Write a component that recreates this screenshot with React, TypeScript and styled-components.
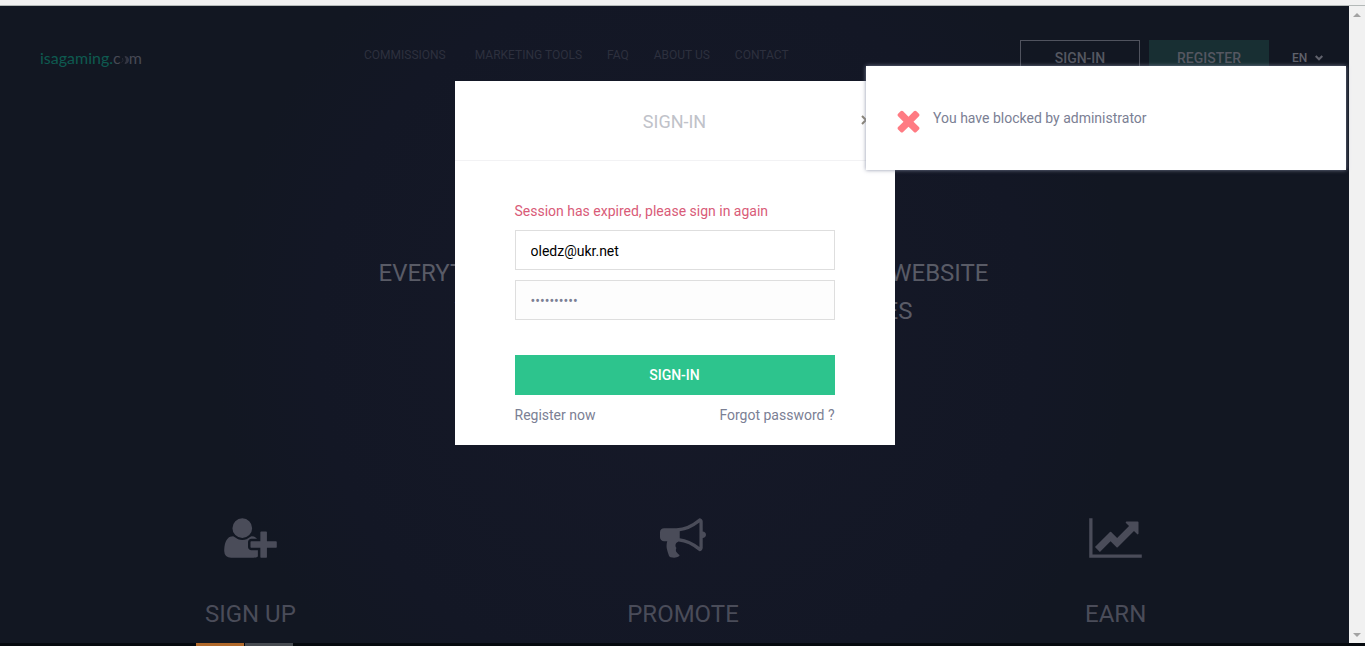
import React from 'react';
import styled, { createGlobalStyle } from 'styled-components';

const GlobalStyle = createGlobalStyle`
  *, *::before, *::after { box-sizing: border-box; }
  html, body { margin: 0; height: 100%; }
  body { background: #131622; font-family: Roboto, "Liberation Sans", sans-serif; font-size: 14px; color: #7b8094; overflow: hidden; }
  #root { height: 100%; }
  h1, h2, p, ul { margin: 0; padding: 0; font-weight: 400; }
  button, input, select { font-family: inherit; }
  a { color: inherit; text-decoration: none; }
`;

const Screen = styled.div`
  display: flex;
  flex-direction: column;
  min-height: 100vh;
`;

const BrowserEdge = styled.div`
  height: 6px;
  background: #f1f1f1;
  border-bottom: 1px solid #b4b9b8;
`;

const Viewport = styled.div`
  position: relative;
  display: flex;
  flex: 1;
`;

const Page = styled.div`
  flex: 1;
  display: flex;
  flex-direction: column;
  background: radial-gradient(circle at 50% 52%, #161928 0, #131725 360px, #121722 460px);
`;

const ScrollTrack = styled.div`
  width: 16px;
  background: #f1f1f1;
  display: flex;
  flex-direction: column;
  justify-content: space-between;
  align-items: center;
  padding: 7px 0 6px;
`;

const Arrow = styled.span<{ $down?: boolean }>`
  border: 4px solid transparent;
  border-top: ${p => (p.$down ? '4px solid #a3a3a3' : '0')};
  border-bottom: ${p => (p.$down ? '0' : '4px solid #a3a3a3')};
`;

const Header = styled.header`
  display: flex;
  align-items: flex-start;
  padding: 34px 26px 0 40px;
  height: 80px;
`;

const Logo = styled.a`
  width: 324px;
  padding-top: 8px;
`;

const Nav = styled.nav`
  display: flex;
  gap: 25px;
  flex: 1;
  padding-top: 6px;
  font-size: 12px;
  line-height: 18px;
  color: #2d303e;
  white-space: nowrap;

  a:first-child { margin-right: 4px; }
`;

const HeaderButton = styled.button<{ $filled?: boolean }>`
  width: 120px;
  height: 36px;
  padding: 0;
  margin-right: 9px;
  border: 1px solid ${p => (p.$filled ? '#182f33' : '#50535e')};
  background: ${p => (p.$filled ? '#182f33' : 'transparent')};
  color: #555761;
  font-size: 14px;
  font-weight: 500;
`;

const Language = styled.label`
  display: flex;
  align-items: center;
  gap: 6px;
  margin-left: 14px;
  height: 36px;
`;

const LanguageSelect = styled.select`
  appearance: none;
  width: 17px;
  padding: 0;
  border: 0;
  background: transparent;
  color: #60626c;
  font-size: 12px;
  font-weight: 500;
`;

const Hero = styled.h1`
  align-self: center;
  display: flex;
  flex-direction: column;
  align-items: center;
  margin: 168px 0 0 18px;
  font-size: 24px;
  line-height: 38px;
  color: #595b66;
  white-space: nowrap;
`;

const HeroLine = styled.span<{ $width: number }>`
  display: flex;
  justify-content: space-between;
  width: ${p => p.$width}px;
`;

const Steps = styled.section`
  display: flex;
  margin-top: 185px;
  padding: 0 17px 0 34px;
`;

const Step = styled.div`
  flex: 1;
  display: flex;
  flex-direction: column;
  align-items: center;
  gap: 37px;
  color: #4a4c59;

  h2 { font-size: 24px; line-height: 32px; }
`;

const Modal = styled.div`
  position: absolute;
  top: 75px;
  left: calc(50% - 228px);
  width: 440px;
  background: #fff;
  padding-bottom: 20px;
`;

const ModalHeader = styled.div`
  position: relative;
  display: flex;
  align-items: center;
  justify-content: center;
  height: 80px;
  padding-top: 2px;
  border-bottom: 1px solid #f2f2f4;
  color: #c0c2c9;

  h2 { font-size: 18px; }
`;

const Close = styled.button`
  position: absolute;
  top: 34px;
  right: 24px;
  padding: 0;
  border: 0;
  background: transparent;
  color: #8a8578;
  display: flex;
`;

const Form = styled.form`
  display: flex;
  flex-direction: column;
  padding: 40px 60px 0;
`;

const ErrorText = styled.p`
  color: #d95b78;
  line-height: 20px;
  margin-bottom: 9px;
`;

const Field = styled.input`
  height: 40px;
  margin-bottom: 10px;
  padding: 2px 15px 0;
  border: 1px solid #dedede;
  background: #fff;
  color: #000;
  font-size: 14px;

  &[type='password'] { background: #fdfdfd; color: #7b8094; }
`;

const Submit = styled.button`
  height: 40px;
  margin-top: 25px;
  border: 0;
  background: #2dc48d;
  color: #fff;
  font-size: 14px;
  font-weight: 500;
`;

const Links = styled.div`
  display: flex;
  justify-content: space-between;
  margin-top: 10px;
  line-height: 20px;
`;

const Toast = styled.div`
  position: absolute;
  top: 60px;
  right: 19px;
  display: flex;
  align-items: center;
  gap: 8px;
  width: 480px;
  height: 104px;
  padding: 4px 0 0 26px;
  background: #fff;
  box-shadow: 0 0 4px rgba(130, 135, 160, 0.9);

  p { margin-bottom: 4px; }
`;

const Taskbar = styled.div`
  display: flex;
  gap: 1px;
  height: 3px;
  padding-left: 196px;
  background: #05090e;
`;

const TaskItem = styled.span<{ $color: string }>`
  width: 48px;
  background: ${p => p.$color};
`;

const UserPlusIcon = () => (
  <svg width="53" height="46" viewBox="0 0 2048 1792" fill="currentColor" aria-hidden="true">
    <path d="M704 896q-159 0-271.500-112.500t-112.500-271.500 112.500-271.500 271.500-112.500 271.500 112.500 112.500 271.500-112.500 271.500-271.500 112.500zm960 128h352q13 0 22.500 9.500t9.500 22.500v192q0 13-9.500 22.500t-22.500 9.500h-352v352q0 13-9.500 22.500t-22.500 9.500h-192q-13 0-22.500-9.500t-9.500-22.500v-352h-352q-13 0-22.500-9.500t-9.500-22.500v-192q0-13 9.500-22.500t22.500-9.500h352v-352q0-13 9.500-22.500t22.500-9.500h192q13 0 22.500 9.500t9.500 22.500v352zm-736 224q0 52 38 90t90 38h256v238q-68 50-171 50h-874q-121 0-194-69t-73-190q0-53 3.500-103.500t14-109 26.500-108.500 43-97.500 62-81 85.500-53.500 111.500-20q19 0 39 17 79 61 154.500 91.500t164.500 30.500 164.500-30.500 154.500-91.500q20-17 39-17 132 0 217 96h-223q-52 0-90 38t-38 90v192z" />
  </svg>
);

const BullhornIcon = () => (
  <svg width="46" height="46" viewBox="0 0 1792 1792" fill="currentColor" aria-hidden="true">
    <path d="M1664 640q53 0 90.500 37.500t37.500 90.500-37.500 90.500-90.500 37.500v384q0 52-38 90t-90 38q-417-347-812-380-58 19-91 66t-31 100.500 40 92.500q-20 33-23 65.500t6 58 33.500 55 48 50 61.500 50.500q-29 58-111.500 83t-168.500 11.500-132-55.500q-7-23-29.500-87.500t-32-94.500-23-89-15-101 3.500-98.500 22-110.500h-122q-66 0-113-47t-47-113v-192q0-66 47-113t113-47h480q435 0 896-384 52 0 90 38t38 90v384zm-128 604v-954q-394 302-768 343v270q377 42 768 341z" />
  </svg>
);

const ChartIcon = () => (
  <svg width="53" height="46" viewBox="0 0 2048 1792" fill="currentColor" aria-hidden="true">
    <path d="M2048 1536v128h-2048v-1536h128v1408h1920zm-128-1248v435q0 21-19.500 29.500t-35.500-7.500l-121-121-633 633q-10 10-23 10t-23-10l-233-233-416 416-192-192 585-585q10-10 23-10t23 10l233 233 464-464-121-121q-16-16-7.500-35.500t29.500-19.500h435q14 0 23 9t9 23z" />
  </svg>
);

const TimesIcon = () => (
  <svg width="33" height="33" viewBox="0 0 1792 1792" fill="#ff7b83" aria-hidden="true">
    <path d="M1490 1322q0 40-28 68l-136 136q-28 28-68 28t-68-28l-294-294-294 294q-28 28-68 28t-68-28l-136-136q-28-28-28-68t28-68l294-294-294-294q-28-28-28-68t28-68l136-136q28-28 68-28t68 28l294 294 294-294q28-28 68-28t68 28l136 136q28 28 28 68t-28 68l-294 294 294 294q28 28 28 68z" />
  </svg>
);

const LogoText = styled.span`
  display: flex;
  align-items: baseline;
  font-family: Lato, sans-serif;
  font-size: 16px;
  line-height: 20px;
  color: #0e5a50;

  em { font-style: normal; color: #474954; }
`;

const LogoMoon = () => (
  <svg width="8" height="8" viewBox="0 0 8 8" fill="none" aria-hidden="true">
    <path d="M4 0.500A3.500 3.500 0 0 1 4 7.500A5 5 0 0 0 4 0.500Z" fill="#343643" stroke="#343643" />
    <path d="M0.500 6.500Q3 5 1.500 2" stroke="#2a2c38" />
  </svg>
);

const steps = [
  { title: 'SIGN UP', icon: <UserPlusIcon /> },
  { title: 'PROMOTE', icon: <BullhornIcon /> },
  { title: 'EARN', icon: <ChartIcon /> },
];

export default function App() {
  return (
    <Screen>
      <GlobalStyle />
      <BrowserEdge />
      <Viewport>
        <Page>
          <Header>
            <Logo href="#home" aria-label="isagaming.com">
              <LogoText>isagaming.<em>c</em><LogoMoon /><em>m</em></LogoText>
            </Logo>
            <Nav>
              {['COMMISSIONS', 'MARKETING TOOLS', 'FAQ', 'ABOUT US', 'CONTACT'].map(item => (
                <a key={item} href="#page">{item}</a>
              ))}
            </Nav>
            <HeaderButton type="button">SIGN-IN</HeaderButton>
            <HeaderButton type="button" $filled>REGISTER</HeaderButton>
            <Language>
              <LanguageSelect aria-label="Language"><option>EN</option></LanguageSelect>
              <svg width="8" height="6" viewBox="0 0 8 6" fill="none" stroke="#60626c" strokeWidth="2" aria-hidden="true">
                <path d="M0.700 1L4 4.300L7.300 1" />
              </svg>
            </Language>
          </Header>
          <Hero>
            <HeroLine $width={610}><span>EVERYTHING</span><span>WEBSITE</span></HeroLine>
            <HeroLine $width={458}><span>VISITS</span><span>SALES</span></HeroLine>
          </Hero>
          <Steps>
            {steps.map(step => (
              <Step key={step.title}>{step.icon}<h2>{step.title}</h2></Step>
            ))}
          </Steps>
        </Page>
        <ScrollTrack><Arrow /><Arrow $down /></ScrollTrack>
        <Modal role="dialog" aria-labelledby="dialog-title">
          <ModalHeader>
            <h2 id="dialog-title">SIGN-IN</h2>
            <Close type="button" aria-label="Close">
              <svg width="10" height="10" viewBox="0 0 10 10" stroke="currentColor" strokeWidth="2"><path d="M1 1L9 9M9 1L1 9" /></svg>
            </Close>
          </ModalHeader>
          <Form onSubmit={e => e.preventDefault()}>
            <ErrorText>Session has expired, please sign in again</ErrorText>
            <Field type="email" aria-label="E-mail" defaultValue="oledz@ukr.net" />
            <Field type="password" aria-label="Password" defaultValue="0123456789" />
            <Submit type="submit">SIGN-IN</Submit>
            <Links><a href="#register">Register now</a><a href="#forgot">Forgot password ?</a></Links>
          </Form>
        </Modal>
        <Toast role="alert"><TimesIcon /><p>You have blocked by administrator</p></Toast>
      </Viewport>
      <Taskbar><TaskItem $color="#b0682a" /><TaskItem $color="#474b51" /></Taskbar>
    </Screen>
  );
}
